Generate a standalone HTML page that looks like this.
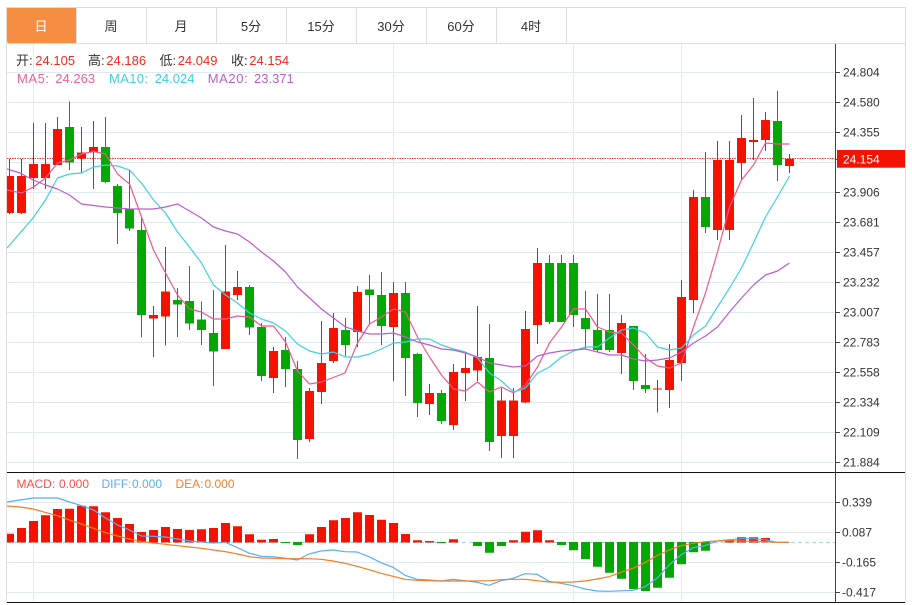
<!DOCTYPE html>
<html>
<head>
<meta charset="utf-8">
<style>
html,body{margin:0;padding:0;background:#fff;width:912px;height:605px;overflow:hidden}
svg{display:block}
text{font-family:"Liberation Sans","Noto Sans CJK SC",sans-serif;font-size:12px}
.ax text{fill:#333}
.tab text{font-size:13px;fill:#333;text-anchor:middle}
.hd text{font-size:13px}
.ln{fill:none;stroke-width:1.2;stroke-linejoin:round}
</style>
</head>
<body>
<svg width="912" height="605" viewBox="0 0 912 605" xmlns="http://www.w3.org/2000/svg">
<defs><clipPath id="c"><rect x="7" y="44" width="828" height="558"/></clipPath></defs>
<rect width="912" height="605" fill="#fff"/>

<!-- grid -->
<path stroke="#e1eaf1" fill="none" d="M7 72.5H835M7 102.5H835M7 132.5H835M7 162.5H835M7 192.5H835M7 222.5H835M7 252.5H835M7 282.5H835M7 312.5H835M7 342.5H835M7 372.5H835M7 402.5H835M7 432.5H835M7 462.5H835M7 502.5H835M7 532.5H835M7 562.5H835M7 592.5H835M33.5 44V602M393.5 44V602M573.5 44V602M681.5 44V602"/>

<!-- tabs -->
<path d="M7 8H76.5V43H9Q7 43 7 41Z" fill="#f58d42"/>
<path stroke="#ddd" fill="none" d="M6 7.5H906M6 43.5H906M6.5 7V603M905.5 7V603M146.5 8V43M216.5 8V43M286.5 8V43M356.5 8V43M426.5 8V43M496.5 8V43M566.5 8V43M76.5 8V43"/>
<g class="tab">
<text x="41" y="31" style="fill:#fff">日</text>
<text x="111" y="31">周</text>
<text x="181" y="31">月</text>
<text x="251" y="31">5分</text>
<text x="321" y="31">15分</text>
<text x="391" y="31">30分</text>
<text x="461" y="31">60分</text>
<text x="531" y="31">4时</text>
</g>

<g clip-path="url(#c)">
<!-- dotted last price -->
<path d="M7 158.5H835" stroke="#f5392e" stroke-dasharray="1.5 1" fill="none"/>

<!-- wicks red -->
<path stroke="#ee1208" fill="none" d="M9.5 159V214M21.5 159V214M33.5 123V189M45.5 123V189M57.5 117V165M81.5 127V173M93.5 121V189M153.5 306V357M165.5 247V345.5M225.5 245V349M237.5 271V300M273.5 347V393M309.5 388V442M321.5 321V404M333.5 313V363M357.5 286V347M393.5 282V381M429.5 384V415M453.5 364V430M465.5 353V401M477.5 306V381M501.5 388V458M513.5 388V458M525.5 311V403M537.5 248V344M621.5 315V374M657.5 380V412.5M669.5 344V408M681.5 280V381M693.5 190V313M717.5 141V240M729.5 141V240M741.5 115V180M753.5 98V160M765.5 112V151M789.5 154V173"/>
<!-- wicks green -->
<path stroke="#089a08" fill="none" d="M69.5 101.5V170M105.5 117V183M117.5 184V244M129.5 170V231M141.5 218V337.5M177.5 288V337M189.5 266V330M201.5 301.5V345M213.5 290V386M249.5 285V335M261.5 323V381M285.5 337V387M297.5 361V459M345.5 318V356M369.5 275V325M381.5 272V345M405.5 282V396M417.5 353V417M441.5 390V424M489.5 324V451M549.5 255V324M561.5 255V322M573.5 255V327M585.5 291V349M597.5 294V352M609.5 294V352M633.5 326V390M645.5 354V393M705.5 152V233M777.5 91V181"/>

<!-- bodies red -->
<path fill="#f41300" d="M5 176h9V213h-9zM17 176h9V213h-9zM29 164h9V178h-9zM41 164h9V178h-9zM53 129h9V165h-9zM77 152.5h9V158.5h-9zM89 147h9V152h-9zM149 315h9V318.5h-9zM161 291.5h9V316.5h-9zM221 291.5h9V349h-9zM233 287h9V295h-9zM269 351h9V378h-9zM305 391h9V439h-9zM317 363h9V392h-9zM329 328h9V361h-9zM353 292h9V332h-9zM389 293h9V327h-9zM425 393h9V404h-9zM449 372h9V425h-9zM461 368h9V373h-9zM473 357h9V370.5h-9zM497 400.5h9V436h-9zM509 400.5h9V436h-9zM521 329h9V402.5h-9zM533 263h9V325h-9zM617 323h9V353h-9zM653 388.5h9V389.5h-9zM665 360h9V390h-9zM677 297h9V363h-9zM689 197h9V300h-9zM713 160h9V230h-9zM725 160h9V230h-9zM737 138h9V163h-9zM749 140h9V142h-9zM761 120h9V140h-9zM785 159h9V166h-9z"/>
<!-- bodies green -->
<path fill="#04a704" d="M65 127h9V162.5h-9zM101 147h9V182h-9zM113 186h9V213h-9zM125 209h9V228.5h-9zM137 230h9V315h-9zM173 300h9V304.5h-9zM185 301h9V323.5h-9zM197 319.5h9V330h-9zM209 333h9V351.5h-9zM245 287h9V327.5h-9zM257 327h9V376h-9zM281 350h9V369h-9zM293 369h9V440h-9zM341 330h9V345h-9zM365 289.5h9V295h-9zM377 295h9V326h-9zM401 293h9V358h-9zM413 354h9V403h-9zM437 393h9V421h-9zM485 358h9V442h-9zM545 263h9V322h-9zM557 263h9V322h-9zM569 263h9V315h-9zM581 318h9V329h-9zM593 330h9V350h-9zM605 330h9V350h-9zM629 326h9V381h-9zM641 385h9V389h-9zM701 197h9V227h-9zM773 121h9V165h-9z"/>

<!-- MA lines -->
<polyline class="ln" stroke="#f0588c" points="7,190 21.5,193 33.5,187 45.5,178 57.5,163 69.5,160 81.5,154 93.5,151.5 105.5,154 117.5,174 129.5,184 141.5,217 153.5,250 165.5,273 177.5,295 189.5,309 201.5,312 213.5,319 225.5,319 237.5,316 249.5,317 261.5,326 273.5,326 285.5,342 297.5,371 309.5,384 321.5,382 345,373 357.5,343 369.5,324 381.5,317 393.5,309 405.5,312 417.5,337 429.5,357 441.5,375 453.5,389 465.5,391 477.5,382 489.5,392 501.5,387 513.5,393 525.5,385 537.5,367 549.5,343 561.5,327 573.5,309 585.5,309 597.5,327 609.5,332 621.5,333 633.5,345 645.5,358 657.5,366 669.5,368 681.5,363 693.5,327 705.5,293 717.5,252 729.5,207 741.5,180 753.5,165 765.5,143 777.5,144 789.5,144"/>
<polyline class="ln" stroke="#3fd0e2" points="7,248 33,218 45.5,200 57.5,178 69.5,174 81.5,173 93.5,167 105.5,165 117.5,166 129.5,170 141.5,183 153.5,200 165.5,213 177.5,232 189.5,247 201.5,263 213.5,285 225.5,295 237.5,303 249.5,313 261.5,319 273.5,323 285.5,331 297.5,344 309.5,351 321.5,354 333.5,352 345.5,357 357.5,357 369.5,354 381.5,349 393.5,343 405.5,342 417.5,339 429.5,339 441.5,345 453.5,349 465.5,352 477.5,358 489.5,373 501.5,381 513.5,392 525.5,388 537.5,373 549.5,367 561.5,357 573.5,351 585.5,347 597.5,347 609.5,338 621.5,330 633.5,328 645.5,333 657.5,347 669.5,350 681.5,348 693.5,335 705.5,326 717.5,307 729.5,288 741.5,268 753.5,243 765.5,217 777.5,197 789.5,176"/>
<polyline class="ln" stroke="#b960c8" points="7,169 20,173 33,180 45.5,185 57.5,189 69.5,195 81.5,204 105.5,207 129.5,209 153.5,209 165.5,207 177.5,204 189.5,211 201.5,218 213.5,227 225.5,231 237.5,234 249.5,242 261.5,252 273.5,261 285.5,272 297.5,287 309.5,298 321.5,309 333.5,318 345.5,327 357.5,331 369.5,334 381.5,334 393.5,333 405.5,337 417.5,342 429.5,345 441.5,349 453.5,350 465.5,353 477.5,357 489.5,363 501.5,365 513.5,367 525.5,366 537.5,356 549.5,353 561.5,351 573.5,350 585.5,349 597.5,352 609.5,355 621.5,355 633.5,359 645.5,361 657.5,360 669.5,358 681.5,352 693.5,343 705.5,336 717.5,327 729.5,312 741.5,298 753.5,285 765.5,275 777.5,271 789.5,263"/>

<!-- MACD baseline -->
<path d="M7 542.5H835" stroke="#a9d6ea" stroke-dasharray="4 3" fill="none"/>
<!-- MACD red -->
<path fill="#f41300" d="M5 533.7h9V542.5h-9zM17 528h9V542.5h-9zM29 521h9V542.5h-9zM41 515.3h9V542.5h-9zM53 509h9V542.5h-9zM65 508.7h9V542.5h-9zM77 505.7h9V542.5h-9zM89 506.3h9V542.5h-9zM101 512.3h9V542.5h-9zM113 518h9V542.5h-9zM125 524h9V542.5h-9zM137 532h9V542.5h-9zM149 530h9V542.5h-9zM161 527h9V542.5h-9zM173 529h9V542.5h-9zM185 530h9V542.5h-9zM197 529.3h9V542.5h-9zM209 528h9V542.5h-9zM221 523h9V542.5h-9zM233 526.3h9V542.5h-9zM245 534.3h9V542.5h-9zM257 539.7h9V542.5h-9zM269 539h9V542.5h-9zM305 534.3h9V542.5h-9zM317 527h9V542.5h-9zM329 520.3h9V542.5h-9zM341 518h9V542.5h-9zM353 512.3h9V542.5h-9zM365 515h9V542.5h-9zM377 519.7h9V542.5h-9zM389 523h9V542.5h-9zM401 534h9V542.5h-9zM413 540.3h9V542.5h-9zM425 541h9V542.5h-9zM449 539.3h9V542.5h-9zM509 540.3h9V542.5h-9zM521 531.7h9V542.5h-9zM533 530.3h9V542.5h-9zM545 540.3h9V542.5h-9zM725 540h9V542.5h-9zM737 537.3h9V542.5h-9zM749 537.3h9V542.5h-9zM761 538h9V542.5h-9z"/>
<!-- MACD green -->
<path fill="#04a704" d="M281 542h9V543h-9zM293 542h9V545h-9zM437 542h9V543h-9zM473 542h9V546h-9zM485 542h9V552.7h-9zM497 542h9V546h-9zM557 542h9V545h-9zM569 542h9V550.3h-9zM581 542h9V559h-9zM593 542h9V566.7h-9zM605 542h9V572.7h-9zM617 542h9V578.7h-9zM629 542h9V589h-9zM641 542h9V591h-9zM653 542h9V587.7h-9zM665 542h9V577.7h-9zM677 542h9V564.3h-9zM689 542h9V552.3h-9zM701 542h9V550.7h-9z"/>

<polyline class="ln" stroke="#5aaef0" points="7,502 33,498 57.5,498 69.5,502 81.5,505.7 93.5,510 105.5,518 117.5,525 129.5,530 141.5,536 153.5,536.3 165.5,537 177.5,539 189.5,541 201.5,542 213.5,543 225.5,542.3 237.5,547.7 249.5,553.3 261.5,556.3 273.5,556.7 285.5,558.3 297.5,560 309,554 321,551 333,550 345,551.7 357,552 369,556.7 381,562.7 393,567.3 405,575.3 417,579.3 429,580 441,581 453,579.3 465,580.7 477,582.3 489,585.3 501,580.7 513,578.3 525,573.7 537,574.3 549,581.3 561,583.3 573,585.7 585,589 597,591 609,591.3 633,590.3 645,586.7 657,578.3 669,565 681,555 693,547.7 705,545.7 717,541 729,539.7 741,538.7 753,538.7 765,539.7 777,542.3 789,542.3"/>
<polyline class="ln" stroke="#f47c22" points="7,506 20,507 33,509 45,512.3 57.5,515.7 69.5,520 81.5,524 93.5,528.3 105.5,532.7 117.5,536 129.5,539 141.5,541.7 153.5,543 165.5,544.3 177.5,545.7 189.5,547 201.5,548.3 213.5,550 225.5,551.7 237.5,554 249.5,556.7 261.5,558 273.5,558.3 285.5,558.7 297.5,558.7 309,558.7 321,559.3 333,561 345,563.3 357,566.3 369,569.7 381,573.3 393,576.3 405,579.3 417,580.3 429,580.7 441,581 453,581 465,581 477,581 489,580.7 501,579.7 513,579.3 525,579.3 537,580.7 549,582 561,582.3 573,582 585,581 597,579 609,576.7 621,572.3 633,568.3 645,562.7 657,555.7 669,550 681,545.7 693,543.3 705,541.7 717,541 729,540.7 741,541 753,541.3 765,541.7 777,542.3 789,542.3"/>
</g>

<!-- frame lines -->
<path stroke="#111" fill="none" d="M7 472.5H905M7 602.5H905"/>
<path stroke="#444" fill="none" d="M835.5 44V602M835 72.5h5M835 102.5h5M835 132.5h5M835 159.5h5M835 192.5h5M835 222.5h5M835 252.5h5M835 282.5h5M835 312.5h5M835 342.5h5M835 372.5h5M835 402.5h5M835 432.5h5M835 462.5h5M835 502.5h5M835 532.5h5M835 562.5h5M835 592.5h5"/>

<!-- axis labels -->
<g class="ax">
<text x="843" y="76.5">24.804</text>
<text x="843" y="106.5">24.580</text>
<text x="843" y="136.5">24.355</text>
<text x="843" y="196.5">23.906</text>
<text x="843" y="226.5">23.681</text>
<text x="843" y="256.5">23.457</text>
<text x="843" y="286.5">23.232</text>
<text x="843" y="316.5">23.007</text>
<text x="843" y="346.5">22.783</text>
<text x="843" y="376.5">22.558</text>
<text x="843" y="406.5">22.334</text>
<text x="843" y="436.5">22.109</text>
<text x="843" y="466.5">21.884</text>
<text x="842" y="506.5">0.339</text>
<text x="842" y="536.5">0.087</text>
<text x="842" y="566.5">-0.165</text>
<text x="842" y="596.5">-0.417</text>
</g>
<rect x="837" y="150" width="68" height="17.7" fill="#f41300"/>
<text x="843" y="163.5" fill="#fff">24.154</text>

<!-- header row -->
<g class="hd">
<text x="16" y="65" fill="#333">开:</text><text x="35.3" y="65" fill="#f62a1e">24.105</text>
<text x="88" y="65" fill="#333">高:</text><text x="106.3" y="65" fill="#f62a1e">24.186</text>
<text x="159.5" y="65" fill="#333">低:</text><text x="177.7" y="65" fill="#f62a1e">24.049</text>
<text x="231" y="65" fill="#333">收:</text><text x="249.3" y="65" fill="#f62a1e">24.154</text>
<text x="17" y="83" fill="#f0609a" textLength="32">MA5:</text><text x="55.3" y="83" fill="#f0609a">24.263</text>
<text x="109" y="83" fill="#3dcde0" textLength="39">MA10:</text><text x="154.7" y="83" fill="#3dcde0">24.024</text>
<text x="207.7" y="83" fill="#b760c8" textLength="40">MA20:</text><text x="254" y="83" fill="#b760c8">23.371</text>
</g>
<text x="16.5" y="488" fill="#f5504a">MACD:</text><text x="59" y="488" fill="#f5504a">0.000</text>
<text x="101.5" y="488" fill="#5aaef0">DIFF:</text><text x="132" y="488" fill="#5aaef0">0.000</text>
<text x="175.5" y="488" fill="#f4812b">DEA:</text><text x="204.5" y="488" fill="#f4812b">0.000</text>
</svg>
</body>
</html>
